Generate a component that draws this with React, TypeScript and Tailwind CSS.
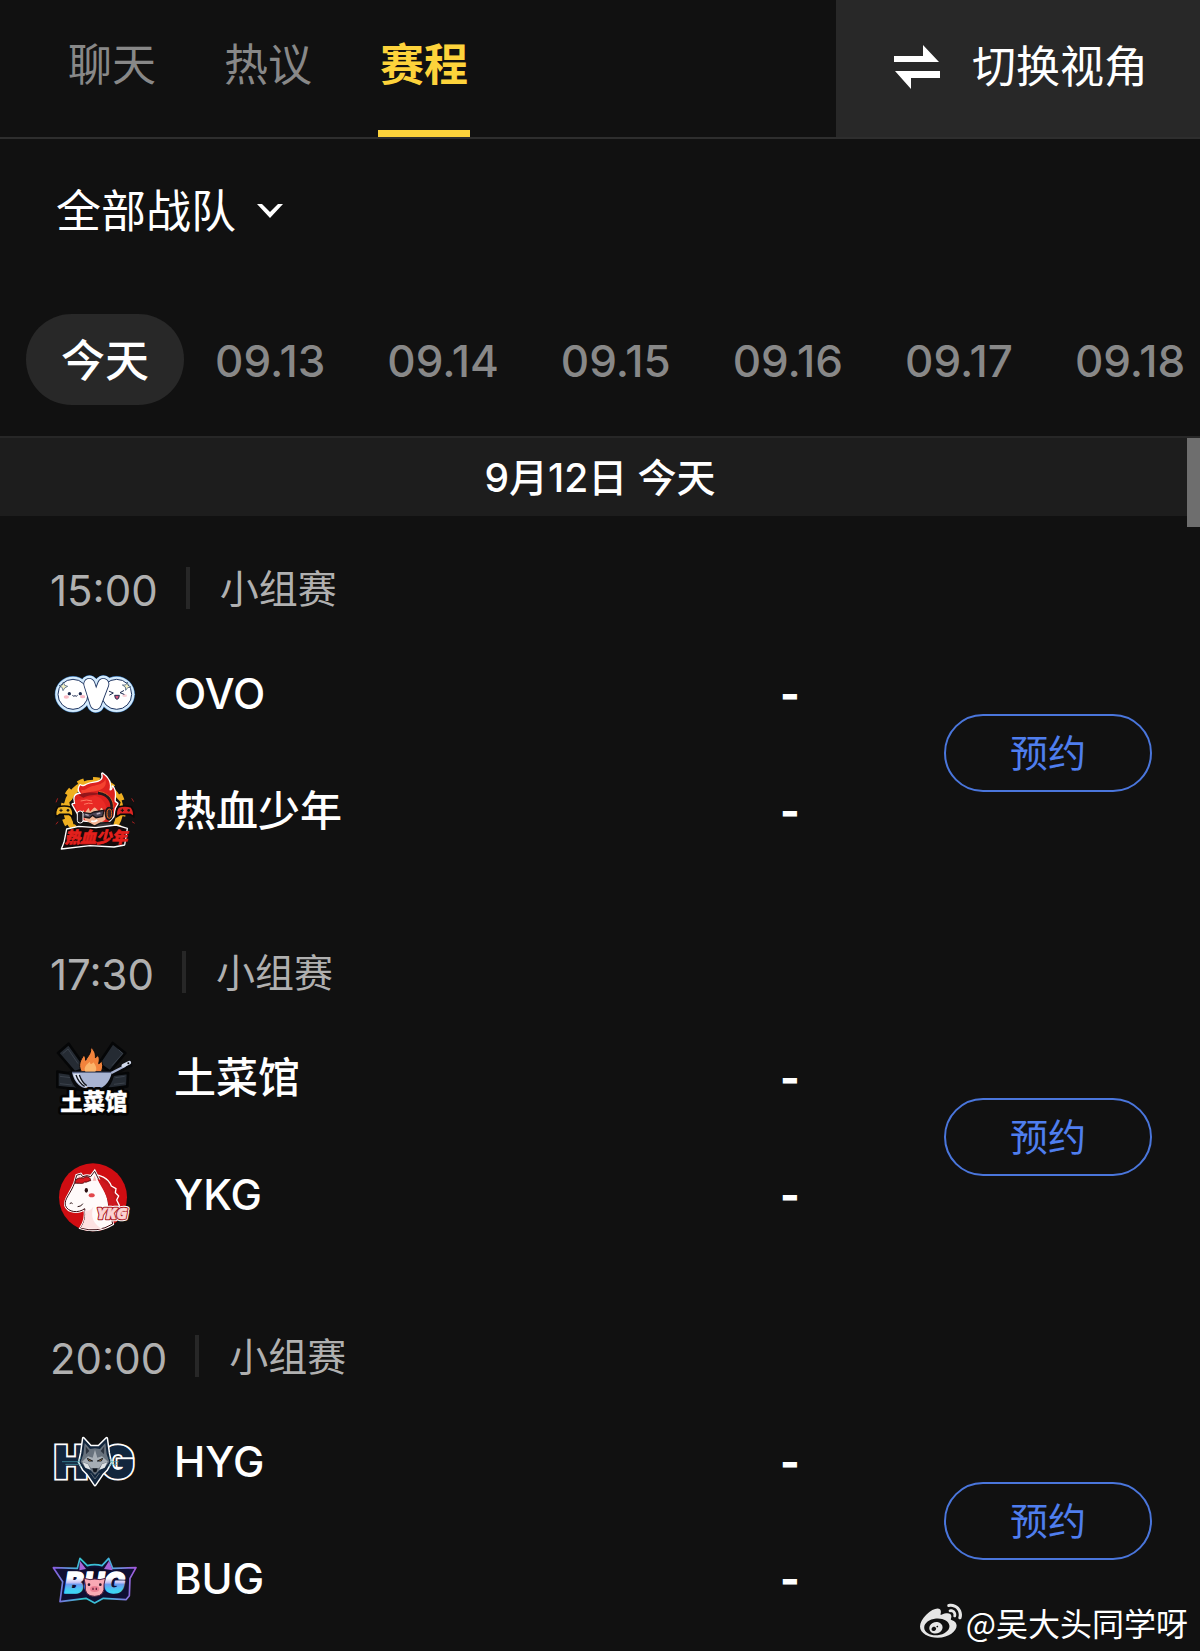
import { useState } from "react";
import type { ReactNode } from "react";
import { FaWeibo } from "react-icons/fa";

type Team = { name: string; logo: ReactNode };
type Match = { time: string; stage: string; teams: Team[] };

const logoFont = '"Noto Sans CJK SC", sans-serif';

function OvoLogo() {
  const vee = "M148 72 L167 132 L190 72";
  return (
    <svg viewBox="42 -18 240 240" className="size-20 shrink-0 overflow-visible" aria-hidden="true">
      <g fill="#1b67b5" stroke="#1b67b5" strokeLinecap="round" strokeLinejoin="round">
        <circle cx="99" cy="103" r="54" />
        <circle cx="230" cy="103" r="54" />
        <path d={vee} strokeWidth="53" />
      </g>
      <g fill="#d3eafc" stroke="#d3eafc" strokeLinecap="round" strokeLinejoin="round">
        <circle cx="99" cy="103" r="53" />
        <circle cx="230" cy="103" r="53" />
        <path d={vee} strokeWidth="51" />
      </g>
      <g fill="#fff" stroke="#1d3461" strokeWidth="3">
        <circle cx="99" cy="103" r="45" />
        <circle cx="230" cy="103" r="45" />
      </g>
      <path d={vee} fill="none" stroke="#1d3461" strokeWidth="36" strokeLinecap="round" strokeLinejoin="round" />
      <path d={vee} fill="none" stroke="#fff" strokeWidth="31" strokeLinecap="round" strokeLinejoin="round" />
      <ellipse cx="79" cy="111" rx="8" ry="5" fill="#f9b9c4" />
      <ellipse cx="128" cy="110" rx="8" ry="5" fill="#f9b9c4" />
      <ellipse cx="254" cy="107" rx="7" ry="4" fill="#fbd3d8" />
      <circle cx="88" cy="101" r="5" fill="#1d2b4f" />
      <circle cx="121" cy="101" r="5" fill="#1d2b4f" />
      <g fill="none" stroke="#1d2b4f" strokeWidth="3" strokeLinecap="round">
        <path d="M98 107 q4 4 7 0 q4 4 7 0" />
        <path d="M208 94 L220 99 L209 105" />
        <path d="M251 92 L240 98 L252 103" />
      </g>
      <path d="M224 106 h14 q-1 12 -7 12 q-6 0 -7 -12z" fill="#d8587d" stroke="#1d2b4f" strokeWidth="3" />
      <g fill="#f4f1c4" stroke="#28456e" strokeWidth="2">
        <path d="M70 66 L74 76 L83 79 L74 84 L69 92 L66 82 L57 77 L67 75z" />
        <path d="M262 66 L264 76 L273 81 L263 83 L257 91 L256 81 L247 75 L257 75z" />
      </g>
    </svg>
  );
}

function HotBloodLogo() {
  const hair =
    "M114 158 L98 130 L108 128 C98 108 106 98 124 98 C114 90 116 80 121 73 C130 82 138 68 158 66 C184 63 192 54 187 38 C205 50 214 66 208 88 C214 90 219 84 218 77 C230 94 222 110 224 122 L232 128 L224 142 L220 166 L204 184 L130 178 Z";
  return (
    <svg viewBox="42 30 240 240" className="size-20 shrink-0 overflow-visible" aria-hidden="true">
      <circle cx="160" cy="146" r="80" fill="none" stroke="#efaf20" strokeWidth="19" />
      <circle cx="160" cy="146" r="92" fill="none" stroke="#efaf20" strokeWidth="12" strokeDasharray="20 28" />
      <path d="M88 124 L100 190 L218 198 L242 124 L220 100 L110 104Z" fill="#111" />
      <path d={hair} fill="#160e10" stroke="#fff" strokeWidth="8" strokeLinejoin="round" />
      <path d={hair} fill="#dd211e" />
      <path d="M124 86 C136 92 142 76 163 74 C184 70 195 62 196 54 C203 78 186 86 168 90 C146 94 134 94 124 104Z" fill="#f4422f" />
      <path d="M116 102 C136 92 160 94 180 98 C164 104 146 100 130 110Z" fill="#93151a" />
      <path d="M136 178 L122 150 L150 138 L200 142 L196 176 L166 194Z" fill="#f3b393" />
      <path d="M110 146 L104 120 C124 108 150 112 164 104 C182 106 198 124 202 150 L194 154 L184 138 L178 152 L164 138 L150 152 L146 140 L134 156 L130 146 L120 160Z" fill="#e92a25" />
      <path d="M122 120 q18 -6 34 0 M132 130 q14 -6 26 -2" fill="none" stroke="#ff7a62" strokeWidth="3" />
      <path d="M174 96 C206 98 218 122 215 144" fill="none" stroke="#21191d" strokeWidth="9" />
      <path d="M176 91 C208 95 222 120 220 140" fill="none" stroke="#e95a25" strokeWidth="3" />
      <path d="M124 154 L152 158 L162 153 L192 148 L188 166 L168 170 L158 163 L148 171 L130 168Z" fill="#4b4354" stroke="#1a1418" strokeWidth="4" />
      <path d="M136 160 l10 3 M170 159 l11 -3" stroke="#b9aebd" strokeWidth="4" />
      <path d="M154 180 q9 4 18 -3" fill="none" stroke="#fff" strokeWidth="5" />
      <rect x="112" y="150" width="17" height="36" rx="8" fill="#201a1f" stroke="#fff" strokeWidth="3" />
      <ellipse cx="207" cy="158" rx="13" ry="21" fill="#1c171a" />
      <ellipse cx="208" cy="158" rx="7" ry="14" fill="#34282a" stroke="#f06b22" strokeWidth="3" />
      <path d="M150 202 L182 186 L212 184 L230 206Z" fill="#3b363b" stroke="#151214" strokeWidth="4" />
      <path d="M53 138 Q72 132 92 138 Q102 152 98 168 L87 160 H60 L48 168 Q44 150 53 138Z" fill="#efb426" stroke="#0b0909" strokeWidth="5" />
      <path d="M235 138 Q255 132 274 138 Q284 152 281 167 L270 160 H242 L230 167 Q226 150 235 138Z" fill="#dc2522" stroke="#0b0909" strokeWidth="5" />
      <path d="M58 148 h10 M63 143 v10 M242 148 h10 M247 143 v10" stroke="#1a1412" strokeWidth="3" />
      <circle cx="84" cy="148" r="4" fill="#1a1412" />
      <circle cx="266" cy="148" r="4" fill="#1a1412" />
      <path d="M53 112 l-5 12 M275 112 l6 10 M54 182 l-6 8 M276 182 l8 5" stroke="#a51f1d" strokeWidth="3" />
      <path d="M80 204 L116 196 L168 200 L228 192 L262 202 L254 252 L222 258 L150 254 L64 264 L72 244Z" fill="#16090a" stroke="#fff" strokeWidth="4" strokeLinejoin="round" />
      <text x="74" y="247" fontFamily={logoFont} fontWeight="900" fontSize="47" fontStyle="italic" fill="#e3201c" stroke="#e3201c" strokeWidth="2">
        热血少年
      </text>
    </svg>
  );
}

function WokLogo() {
  return (
    <svg viewBox="42 27 240 240" className="size-20 shrink-0 overflow-visible" aria-hidden="true">
      <g fill="#252b33" stroke="#050607" strokeWidth="8" strokeLinejoin="round">
        <path d="M54 72 L86 44 L138 118 L104 130Z" />
        <path d="M218 42 L256 72 L210 128 L176 104Z" />
        <path d="M52 128 L108 136 L124 182 L52 174Z" />
        <path d="M264 132 L212 138 L190 182 L262 172Z" />
      </g>
      <g fill="none" stroke="#454d58" strokeWidth="2">
        <path d="M68 74 L84 60 L114 104 M236 62 L248 74 L216 110 M60 142 L92 146 M60 164 L96 168 M254 142 L226 146 M254 162 L222 166" />
      </g>
      <path d="M86 126 L226 124 L252 102 L274 96 L278 112 L222 140 C212 178 190 196 158 196 C120 196 92 172 86 126Z" fill="#08090b" />
      <path d="M124 128 C112 106 124 90 132 78 C136 84 137 88 137 94 C144 80 156 72 151 54 C165 64 167 76 166 86 C171 84 173 80 173 76 C181 90 177 98 176 104 C181 102 184 98 184 94 C191 110 187 120 184 128Z" fill="#f2833c" stroke="#08090b" strokeWidth="3" />
      <path d="M136 128 C130 114 140 106 150 98 C150 108 156 106 160 100 C168 110 172 120 166 128Z" fill="#fbb56b" />
      <path d="M96 130 H216 C208 162 190 182 158 182 C124 182 102 162 96 130Z" fill="#a9b4d2" />
      <path d="M100 136 C106 158 124 174 146 176 C128 164 120 150 118 134Z" fill="#dfe5f4" />
      <path d="M108 138 q8 24 26 34 M118 138 q8 22 22 32" stroke="#12151c" strokeWidth="4" fill="none" />
      <path d="M96 130 H216" stroke="#5b6684" strokeWidth="4" />
      <path d="M214 132 L256 110" stroke="#a9b4d2" strokeWidth="7" />
      <path d="M250 110 L268 101" stroke="#d2daec" strokeWidth="11" strokeLinecap="round" />
      <circle cx="265" cy="103" r="3" fill="#08090b" />
      <g fontFamily={logoFont} fontWeight="900" fontSize="67" strokeLinejoin="round">
        <text x="61" y="243" fill="#040404" stroke="#040404" strokeWidth="18">土菜馆</text>
        <text x="61" y="243" fill="#fff" stroke="#fff" strokeWidth="1">土菜馆</text>
      </g>
    </svg>
  );
}

function YkgLogo() {
  return (
    <svg viewBox="42 15 240 240" className="size-20 shrink-0 overflow-visible" aria-hidden="true">
      <circle cx="159" cy="142" r="102" fill="#d00d12" />
      <path d="M150 76 C180 70 206 86 214 108 L228 116 L226 128 L236 138 L230 150 L238 166 L214 214 L166 170Z" fill="#c1161b" stroke="#fff" strokeWidth="4" strokeLinejoin="round" />
      <path d="M104 98 L110 76 L122 72 L128 80 Q142 74 152 80 L164 64 L174 84 C180 102 204 124 206 168 L218 222 Q172 250 122 234 C134 216 138 198 134 176 C116 190 84 188 76 166 C72 146 92 132 104 98Z" fill="#fffafa" stroke="#fff" strokeWidth="8" />
      <path d="M104 98 L110 76 L122 72 L128 80 Q142 74 152 80 L164 64 L174 84 C180 102 204 124 206 168 L218 222 Q172 250 122 234 C134 216 138 198 134 176 C116 190 84 188 76 166 C72 146 92 132 104 98Z" fill="#fffafa" stroke="#3d0a10" strokeWidth="3" />
      <path d="M122 234 C134 216 138 198 134 180 C150 186 154 176 160 170 C150 200 160 224 190 238Z" fill="#fde1e1" />
      <path d="M106 100 C104 84 122 82 130 84 C140 76 152 82 152 92 C144 92 142 98 134 96 C126 104 118 98 106 100Z" fill="#d5191f" stroke="#5a0a10" strokeWidth="3" />
      <path d="M172 86 C202 94 226 124 228 168 L206 176 C206 138 186 116 172 86Z" fill="#cf181e" />
      <path d="M158 92 L164 76 L169 92Z" fill="#f6b4b4" />
      <path d="M114 84 L118 78 L123 82" fill="none" stroke="#f6b4b4" strokeWidth="3" />
      <ellipse cx="139" cy="121" rx="5" ry="7" fill="#2a1012" />
      <ellipse cx="155" cy="136" rx="9" ry="6" fill="#e2474b" />
      <path d="M90 160 q4 -4 7 0 M114 170 q10 0 14 -8" fill="none" stroke="#2a1012" strokeWidth="3" strokeLinecap="round" />
      <g fontFamily='"Open Sans", sans-serif' fontStyle="italic" fontWeight="800" fontSize="47" strokeLinejoin="round">
        <text x="170" y="208" fill="#fff" stroke="#fff" strokeWidth="14">YKG</text>
        <text x="170" y="208" fill="#a5141a" stroke="#a5141a" strokeWidth="8">YKG</text>
        <text x="170" y="208" fill="#fbd3d3" stroke="#fbd3d3" strokeWidth="2">YKG</text>
      </g>
    </svg>
  );
}

function HygLogo() {
  const head =
    "M130 46 L152 70 L176 70 L200 46 L206 90 L212 118 L200 140 L188 152 L165 186 L142 152 L130 140 L118 118 L124 90Z";
  return (
    <svg viewBox="42 -3 240 240" className="size-20 shrink-0 overflow-visible" aria-hidden="true">
      <g fontFamily='"Inter", sans-serif' fontWeight="900" fontSize="130" strokeLinejoin="miter">
        <text x="44" y="165" fill="#fff" stroke="#fff" strokeWidth="15">H</text>
        <text x="183" y="165" fill="#fff" stroke="#fff" strokeWidth="15">G</text>
        <text x="44" y="165" fill="#12263d" stroke="#12263d" strokeWidth="4">H</text>
        <text x="183" y="165" fill="#12263d" stroke="#12263d" strokeWidth="4">G</text>
      </g>
      <path d={head} fill="#12263d" stroke="#fff" strokeWidth="9" strokeLinejoin="round" />
      <path d={head} fill="#12263d" />
      <path d="M134 60 L150 78 L165 76 L180 78 L196 60 L200 94 L208 116 L194 134 L180 140 L165 156 L150 140 L136 134 L122 116 L130 94Z" fill="#68727d" />
      <path d="M137 70 L148 84 L138 94Z M193 70 L182 84 L192 94Z" fill="#2c3440" />
      <path d="M165 80 L172 104 L186 100 L204 116 L186 122 L178 134 L165 138 L152 134 L144 122 L126 116 L144 100 L158 104Z" fill="#a7aeb5" />
      <path d="M128 118 L144 124 L152 140 L136 134Z M202 118 L186 124 L178 140 L194 134Z" fill="#dfe3e6" />
      <path d="M142 106 L158 114 L146 114Z M188 106 L172 114 L184 114Z" fill="#e99a3c" stroke="#161c25" strokeWidth="3" />
      <path d="M157 136 H173 L169 148 H161Z" fill="#0f151d" />
      <path d="M152 150 L165 168 L178 150" fill="none" stroke="#5a6570" strokeWidth="3" />
      <path d="M66 116 H120 M76 124 H116 M236 116 H210 M232 124 H214 M122 104 l-8 14 l10 14 M208 104 l8 14 l-10 14" fill="none" stroke="#4aa6b4" strokeWidth="2" />
    </svg>
  );
}

function BugLogo() {
  const badge =
    "M40 86 L112 88 L120 58 L142 80 Q164 74 186 80 L206 58 L218 88 L288 86 L270 118 L268 170 L258 182 L190 178 L164 192 L138 178 L60 188 L68 128Z";
  return (
    <svg viewBox="42 0 240 240" className="size-20 shrink-0 overflow-visible" aria-hidden="true">
      <defs>
        <linearGradient id="bug-edge" x1="0" y1="0" x2="1" y2="0">
          <stop offset="0" stopColor="#8a5be0" />
          <stop offset="0.35" stopColor="#35c5cf" />
          <stop offset="0.65" stopColor="#3fb8dc" />
          <stop offset="1" stopColor="#a557dc" />
        </linearGradient>
        <linearGradient id="bug-letters" gradientUnits="userSpaceOnUse" x1="0" y1="98" x2="0" y2="162">
          <stop offset="0.3" stopColor="#ffffff" />
          <stop offset="0.5" stopColor="#c9c5f5" />
          <stop offset="0.6" stopColor="#6d9cf0" />
          <stop offset="0.9" stopColor="#3fd4f4" />
        </linearGradient>
      </defs>
      <path d={badge} fill="#100f33" stroke="url(#bug-edge)" strokeWidth="5" strokeLinejoin="round" />
      <path d="M120 66 L138 90 L118 94Z M207 66 L218 94 L192 90Z" fill="#a763d8" />
      <path d="M142 90 Q164 82 188 90 L196 114 H134Z" fill="#0b0b24" />
      <g fontFamily='"Inter", sans-serif' fontStyle="italic" fontWeight="900" fontSize="84" fill="url(#bug-letters)" stroke="url(#bug-letters)" strokeWidth="4" strokeLinejoin="round">
        <text x="74" y="161">B</text>
        <text x="132" y="161">U</text>
        <text x="191" y="161">G</text>
      </g>
      <path d="M132 118 L150 122 Q164 118 180 122 L196 118 L192 136 Q196 172 164 172 Q132 172 136 138Z" fill="#f9a9b5" stroke="#51213f" strokeWidth="3" strokeLinejoin="round" />
      <ellipse cx="164" cy="150" rx="14" ry="9" fill="#ec7f94" />
      <path d="M159 146 v7 M169 146 v7" stroke="#6b2741" strokeWidth="4" />
      <circle cx="147" cy="137" r="4" fill="#2c1528" />
      <circle cx="181" cy="137" r="4" fill="#2c1528" />
    </svg>
  );
}

function SwapIcon() {
  return (
    <svg viewBox="0 0 46 44" className="h-11 w-[46px]" fill="currentColor" aria-hidden="true">
      <path d="M0 11 H29 V0 L45 17 H0Z" />
      <path d="M46 33 H17 V44 L1 26 H46Z" />
    </svg>
  );
}

const tabs = ["聊天", "热议", "赛程"];
const teamFilters = ["全部战队"];
const dates = ["今天", "09.13", "09.14", "09.15", "09.16", "09.17", "09.18"];

const matches: Match[] = [
  {
    time: "15:00",
    stage: "小组赛",
    teams: [
      { name: "OVO", logo: <OvoLogo /> },
      { name: "热血少年", logo: <HotBloodLogo /> },
    ],
  },
  {
    time: "17:30",
    stage: "小组赛",
    teams: [
      { name: "土菜馆", logo: <WokLogo /> },
      { name: "YKG", logo: <YkgLogo /> },
    ],
  },
  {
    time: "20:00",
    stage: "小组赛",
    teams: [
      { name: "HYG", logo: <HygLogo /> },
      { name: "BUG", logo: <BugLogo /> },
    ],
  },
];

function MatchCard({ match }: { match: Match }) {
  return (
    <article>
      <div className="flex h-11 items-center text-[#b0b0b0]">
        <time className="pt-1.5 text-[42px] leading-none">{match.time}</time>
        <span className="mr-[30px] ml-7 h-[42px] w-1 bg-[#272727]" />
        <span className="text-[39px] leading-none">{match.stage}</span>
      </div>
      <div className="mt-11 flex items-center pl-1">
        <div className="flex flex-1 flex-col gap-[37px]">
          {match.teams.map((team) => (
            <div key={team.name} className="flex items-center">
              {team.logo}
              <span className="ml-10 flex-1 text-[42px] leading-none font-medium">
                {team.name}
              </span>
              <span className="w-5 text-center text-[42px] leading-none font-extrabold">
                -
              </span>
            </div>
          ))}
        </div>
        <button
          type="button"
          className="ml-36 h-[78px] w-52 rounded-full border-2 border-[#4a76dc] text-[38px] leading-none text-[#4f7eee]"
        >
          预约
        </button>
      </div>
    </article>
  );
}

export default function App() {
  const [tab, setTab] = useState("赛程");
  const [date, setDate] = useState("今天");

  return (
    <main className="relative min-h-screen overflow-hidden bg-[#111111] pb-7 font-['Inter','Noto_Sans_CJK_SC',sans-serif] text-white">
      <header className="flex justify-between border-b-2 border-[#2e2e2e]">
        <nav className="flex gap-16 pl-[66px]">
          {tabs.map((item) => (
            <button
              key={item}
              type="button"
              onClick={() => setTab(item)}
              className={
                item === tab
                  ? "h-[137px] border-b-[7px] border-[#fdd33b] px-0.5 text-[44px] leading-none font-bold text-[#fdd33b]"
                  : "h-[137px] border-b-[7px] border-transparent px-0.5 text-[44px] leading-none text-[#888888]"
              }
            >
              {item}
            </button>
          ))}
        </nav>
        <button
          type="button"
          className="flex items-center gap-8 bg-[#282828] pr-[52px] pb-1 pl-[58px] text-[44px] leading-none"
        >
          <SwapIcon />
          <span>切换视角</span>
        </button>
      </header>

      <div className="flex items-center pt-10 pl-14">
        <label className="flex items-center gap-5">
          <select
            aria-label="战队"
            className="h-16 appearance-none bg-transparent text-[45px] leading-none outline-none"
          >
            {teamFilters.map((team) => (
              <option key={team}>{team}</option>
            ))}
          </select>
          <svg viewBox="0 0 26 14" className="h-[14px] w-[26px]" aria-hidden="true">
            <path d="M0 0 H5 L13 8 L21 0 H26 L13 14Z" fill="currentColor" />
          </svg>
        </label>
      </div>

      <div className="mt-[71px] flex overflow-hidden pb-[31px] pl-[26px]">
        {dates.map((item) => (
          <button
            key={item}
            type="button"
            onClick={() => setDate(item)}
            className={
              item === date
                ? "h-[91px] shrink-0 rounded-full bg-[#282828] px-[35px] pt-0.5 text-[44px] leading-none font-medium"
                : "h-[91px] shrink-0 px-[31px] pt-0.5 text-[44px] leading-none font-medium text-[#888888]"
            }
          >
            {item}
          </button>
        ))}
      </div>

      <section className="relative border-t-2 border-[#272727]">
        <h2 className="flex h-[78px] items-center justify-center bg-[#1d1d1d] text-[39px] leading-none font-medium">
          9月12日 今天
        </h2>
        <div className="absolute top-0 right-0 h-[89px] w-[13px] bg-[#6e6e6e]" />
        <div className="flex flex-col gap-[99px] pt-[50px] pr-12 pl-[50px]">
          {matches.map((match) => (
            <MatchCard key={match.time} match={match} />
          ))}
        </div>
      </section>

      <div className="absolute right-3 bottom-2 flex items-center gap-1 font-['Noto_Sans_CJK_SC',sans-serif] text-[32px] leading-10">
        <FaWeibo className="size-[42px] text-[#e6e6e6]" />
        <span>@吴大头同学呀</span>
      </div>
    </main>
  );
}
